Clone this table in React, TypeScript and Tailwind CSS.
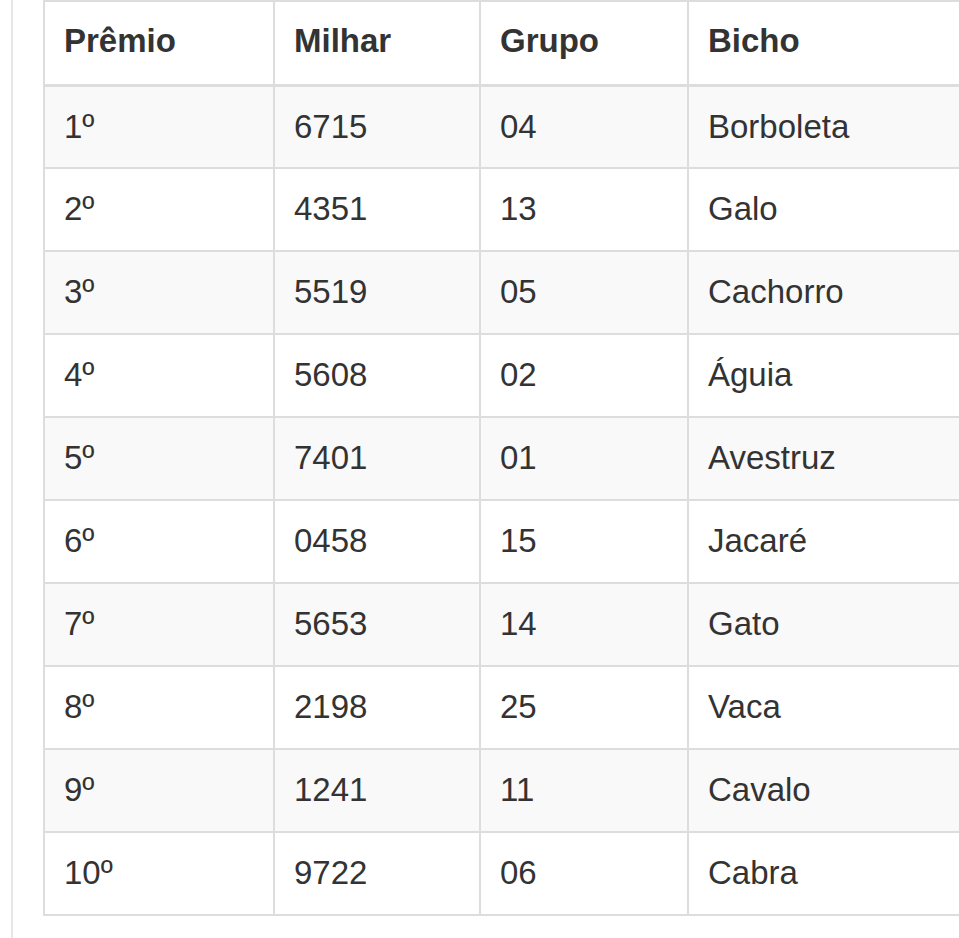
const rows: [string, string, string, string][] = [
  ['1º', '6715', '04', 'Borboleta'],
  ['2º', '4351', '13', 'Galo'],
  ['3º', '5519', '05', 'Cachorro'],
  ['4º', '5608', '02', 'Águia'],
  ['5º', '7401', '01', 'Avestruz'],
  ['6º', '0458', '15', 'Jacaré'],
  ['7º', '5653', '14', 'Gato'],
  ['8º', '2198', '25', 'Vaca'],
  ['9º', '1241', '11', 'Cavalo'],
  ['10º', '9722', '06', 'Cabra'],
]

export default function App() {
  return (
    <div className="h-[938px] w-[959px] overflow-hidden bg-white font-['Liberation_Sans',Arial,sans-serif] text-[#333]">
      <div className="ml-[11px] h-full border-l-2 border-[#e6e6e6] pl-[30px]">
        <table className="w-[1000px] table-fixed border-collapse text-[33px] leading-[45px]">
          <colgroup>
            <col className="w-[230px]" />
            <col className="w-[206px]" />
            <col className="w-[208px]" />
            <col />
          </colgroup>
          <thead>
            <tr className="h-[84px]">
              {['Prêmio', 'Milhar', 'Grupo', 'Bicho'].map((h) => (
                <th
                  key={h}
                  className="border-2 border-b-[3px] border-[#dddddd] pl-[19px] pr-[18px] pt-[16px] pb-[18px] text-left align-top font-bold"
                >
                  {h}
                </th>
              ))}
            </tr>
          </thead>
          <tbody>
            {rows.map((r, i) => (
              <tr
                key={r[0]}
                className={`h-[83px] ${i % 2 === 0 ? 'bg-[#f9f9f9]' : 'bg-white'}`}
              >
                {r.map((c, j) => (
                  <td
                    key={j}
                    className="border-2 border-[#dddddd] pl-[19px] pr-[18px] py-[17px] align-top"
                  >
                    {c}
                  </td>
                ))}
              </tr>
            ))}
          </tbody>
        </table>
      </div>
    </div>
  )
}
